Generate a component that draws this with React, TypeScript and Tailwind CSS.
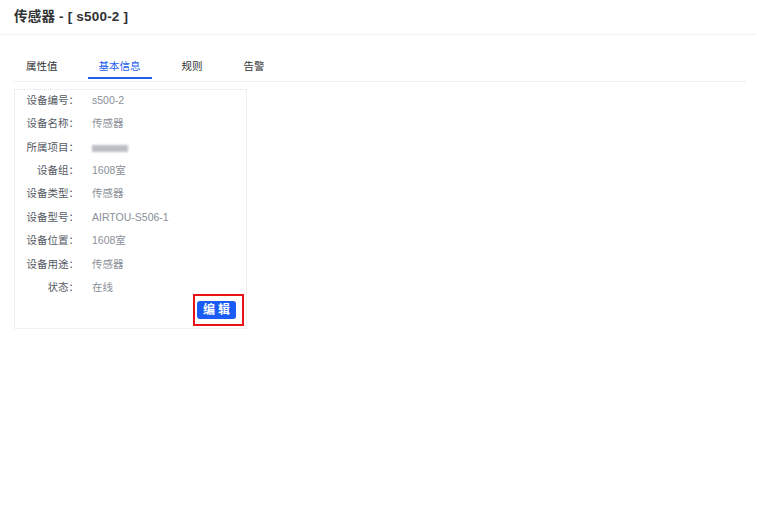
const fields: { label: string; value: string; masked?: boolean }[] = [
  { label: '设备编号：', value: 's500-2' },
  { label: '设备名称：', value: '传感器' },
  { label: '所属项目：', value: '', masked: true },
  { label: '设备组：', value: '1608室' },
  { label: '设备类型：', value: '传感器' },
  { label: '设备型号：', value: 'AIRTOU-S506-1' },
  { label: '设备位置：', value: '1608室' },
  { label: '设备用途：', value: '传感器' },
  { label: '状态：', value: '在线' },
]

const tabs = ['属性值', '基本信息', '规则', '告警']

export default function App() {
  return (
    <div
      className="h-[519px] w-[757px] bg-white text-[#303133]"
      style={{ fontFamily: '"Liberation Sans", "Noto Sans CJK SC", sans-serif' }}
    >
      <div className="mr-[2px] flex h-[35px] items-center border-b border-dotted border-[#dfe6ee] px-[14px]">
        <h1 className="text-[13.5px] font-bold tracking-[0.2px]">传感器 - [ s500-2 ]</h1>
      </div>

      <div className="ml-[14px] mr-[12px] mt-[14px] flex h-[33px] gap-[19px] border-b border-dotted border-[#dfe3ea] pl-[1px]">
        {tabs.map((t, i) => (
          <div
            key={t}
            className={
              'relative flex h-[32px] items-center px-[11px] pt-[3px] text-[10.5px] ' +
              (i === 1 ? 'text-[#1e5ef0]' : 'text-[#303133]')
            }
          >
            {t}
            {i === 1 && <span className="absolute bottom-[2px] left-0 right-0 h-[2px] bg-[#1e5ef0]" />}
          </div>
        ))}
      </div>

      <div className="ml-[14px] mt-[7px] flex h-[240px] w-[233px] flex-col border border-dotted border-[#e0e4ea]">
        <div className="-mt-[1px] flex flex-col">
          {fields.map((f) => (
            <div key={f.label} className="flex h-[23.4px] items-center text-[10.5px]">
              <span className="w-[64px] text-right text-[#555a63]">{f.label}</span>
              <span className="ml-[13px] text-[#8a8f98]">
                {f.masked ? (
                  <span className="mt-[2px] block h-[7px] w-[36px] bg-[#bcbec6] blur-[1.2px]" />
                ) : (
                  f.value
                )}
              </span>
            </div>
          ))}
        </div>
        <div className="mr-[2px] mt-[-6px] flex justify-end">
          <div className="border-2 border-[#e8141a] pb-[5px] pl-[2px] pr-[6px] pt-[5px]">
            <button className="flex h-[18px] w-[39px] items-center justify-center rounded-[3px] bg-[#1a5cf5] text-[12px] font-bold tracking-[3px] text-white">
              <span className="pl-[3px]">编辑</span>
            </button>
          </div>
        </div>
      </div>
    </div>
  )
}
